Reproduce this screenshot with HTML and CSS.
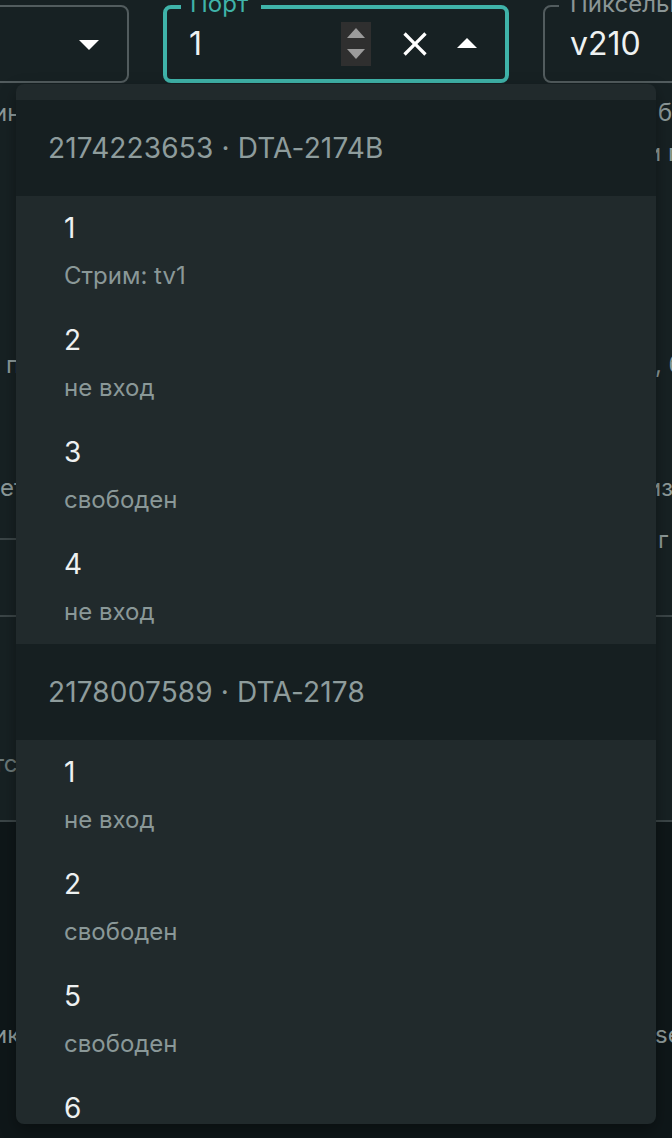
FILE: index.html
```html
<!DOCTYPE html>
<html lang="ru">
<head>
<meta charset="utf-8">
<title>Порт</title>
<link rel="stylesheet" href="styles.css">
</head>
<body>
<div class="fields">
  <div class="field">
    <span class="value"></span>
    <svg class="popicon" viewBox="0 0 24 24"><path d="M7 10l5 5 5-5z"/></svg>
  </div>
  <div class="field focused">
    <span class="label">Порт</span>
    <span class="value">1</span>
    <span class="spinner"><svg viewBox="0 0 30 44" width="30" height="44"><polygon points="6,16 15,6 24,16"/><polygon points="6,27 24,27 15,37"/></svg></span>
    <svg class="clear" viewBox="0 0 24 24"><path d="M19 6.41 17.59 5 12 10.59 6.41 5 5 6.41 10.59 12 5 17.59 6.41 19 12 13.41 17.59 19 19 17.59 13.41 12z"/></svg>
    <svg class="popicon" viewBox="0 0 24 24"><path d="M7 14l5-5 5 5z"/></svg>
  </div>
  <div class="field">
    <span class="label">Пиксельный формат</span>
    <span class="value">v210</span>
  </div>
</div>

<div class="bg">
  <div class="row r1"><span class="bl"><span class="cut">ин</span></span><span class="br">б</span></div>
  <div class="row r2"><span class="bl"></span><span class="br pull">и п</span></div>
  <div class="row r3"><span class="bl lead">п</span><span class="br nudge">, б</span></div>
  <div class="row r4"><span class="bl">ет</span><span class="br pull">из</span></div>
  <div class="row r5"><span class="bl"><span class="rule"></span></span><span class="br">г</span></div>
  <div class="divider d1"></div>
  <div class="row r6"><span class="bl dim"><span class="cut">тс</span></span><span class="br"></span></div>
  <div class="divider d2"></div>
  <div class="footer">
    <div class="row r7"><span class="bl"><span class="cut">ик</span></span><span class="br nudge">se</span></div>
  </div>
</div>

<div class="popup">
  <div class="group-h">2174223653 · DTA-2174B</div>
  <div class="opt"><div class="opt-p">1</div><div class="opt-s">Стрим: tv1</div></div>
  <div class="opt"><div class="opt-p">2</div><div class="opt-s">не вход</div></div>
  <div class="opt"><div class="opt-p">3</div><div class="opt-s">свободен</div></div>
  <div class="opt"><div class="opt-p">4</div><div class="opt-s">не вход</div></div>
  <div class="group-h">2178007589 · DTA-2178</div>
  <div class="opt"><div class="opt-p">1</div><div class="opt-s">не вход</div></div>
  <div class="opt"><div class="opt-p">2</div><div class="opt-s">свободен</div></div>
  <div class="opt"><div class="opt-p">5</div><div class="opt-s">свободен</div></div>
  <div class="opt"><div class="opt-p">6</div><div class="opt-s">не вход</div></div>
</div>
</body>
</html>
```

FILE: styles.css
```css
html, body {
  margin: 0;
  padding: 0;
}
body {
  background: #172123;
  font-family: Inter, "Noto Sans", "Liberation Sans", sans-serif;
  width: 672px;
  height: 1138px;
  overflow: hidden;
  position: relative;
}

/* ---- top fields ---- */
.fields {
  display: flex;
  gap: 34px;
  margin: 5px 0 1px -217px;
}
.field {
  flex: none;
  width: 346px;
  height: 78px;
  box-sizing: border-box;
  border: 2px solid #525c5e;
  border-radius: 8px;
  display: flex;
  align-items: center;
  padding: 0 14px 0 25px;
  position: relative;
}
.field.focused {
  border: 4px solid #3fb3a9;
  padding-left: 22px;
}
.value {
  flex: 1;
  font-size: 32px;
  line-height: 40px;
  color: #eef1f1;
  white-space: nowrap;
}
.label {
  position: absolute;
  top: -15px;
  left: 14px;
  font-size: 24px;
  line-height: 24px;
  padding: 0 10px 0 11px;
  background: #172123;
  color: #8b9696;
  white-space: nowrap;
}
.focused .label {
  top: -17px;
  padding: 0 13px 0 9px;
  color: #3fb3a9;
}
.spinner {
  flex: none;
  width: 30px;
  height: 44px;
  background: #2f2f2f;
  margin-right: 24px;
  display: block;
}
.spinner svg {
  display: block;
  fill: #9b9b9b;
}
.clear {
  flex: none;
  width: 40px;
  height: 40px;
  fill: #ffffff;
  margin-right: 8px;
}
.popicon {
  flex: none;
  width: 48px;
  height: 48px;
  fill: #ffffff;
}

/* ---- background content (mostly under popup) ---- */
.row {
  display: flex;
  align-items: center;
  height: 40px;
  font-size: 24px;
  color: #8d9a9a;
  white-space: nowrap;
}
.bl {
  flex: none;
  width: 656px;
  overflow: hidden;
  display: flex;
  align-items: center;
}
.br {
  flex: none;
  padding-left: 2px;
}
.br.pull {
  margin-left: -11px;
}
.br.nudge {
  margin-left: -3px;
}
.bl.lead {
  padding-left: 6px;
  box-sizing: border-box;
}
.bl.dim {
  color: #6c7979;
}
.cut {
  margin-left: -7px;
}
.rule {
  display: block;
  width: 656px;
  height: 2px;
  background: #3b4547;
}
.divider {
  height: 2px;
  background: #3b4547;
}
.r1 { margin-top: 9px; }
.r2 { margin-top: 0; }
.r3 { margin-top: 172px; }
.r4 { margin-top: 83px; }
.r5 { margin-top: 12px; }
.d1 { margin-top: 56px; }
.r6 { margin-top: 126px; }
.d2 { margin-top: 37px; }
.footer {
  background: #0f1719;
  height: 320px;
  padding-top: 192px;
  box-sizing: border-box;
}

/* ---- popup ---- */
.popup {
  position: absolute;
  left: 16px;
  top: 84px;
  width: 640px;
  height: 1040px;
  box-sizing: border-box;
  padding-top: 16px;
  background: #212a2c;
  border-radius: 8px;
  overflow: hidden;
  box-shadow: 0 6px 16px rgba(0, 0, 0, 0.35);
}
.group-h {
  height: 96px;
  line-height: 96px;
  padding-left: 32px;
  background: #161f21;
  color: #8e9c9c;
  font-size: 28px;
  letter-spacing: 0.15px;
  white-space: nowrap;
}
.opt {
  padding: 12px 48px;
}
.opt-p {
  font-size: 28px;
  line-height: 40px;
  color: #eef1f1;
}
.opt-s {
  font-size: 24px;
  line-height: 40px;
  margin-top: 8px;
  color: #8a9898;
}
```
